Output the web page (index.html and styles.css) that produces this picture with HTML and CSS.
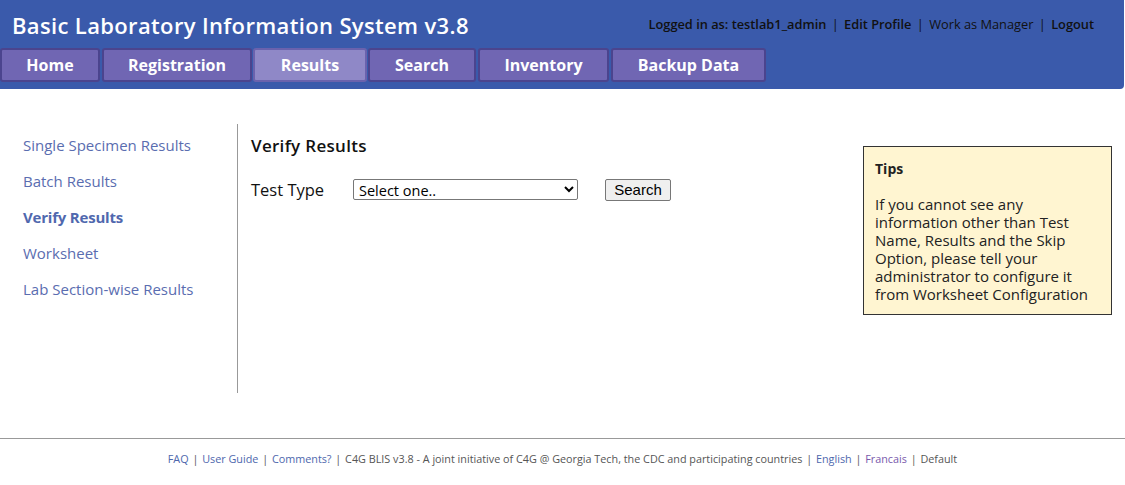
FILE: index.html
```html
<!DOCTYPE html>
<html>
<head>
<meta charset="utf-8">
<title>BLIS</title>
<link rel="stylesheet" href="styles.css">
</head>
<body>
<div class="header">
  <div class="top">
    <div class="title">Basic Laboratory Information System v3.8</div>
    <div class="user">
      <span class="strong">Logged in as: testlab1_admin</span>
      <span class="sep">|</span> <span class="strong">Edit Profile</span>
      <span class="sep">|</span> <span>Work as Manager</span>
      <span class="sep">|</span> <span class="strong">Logout</span>
    </div>
  </div>
  <div class="nav">
    <a class="tab t-home">Home</a>
    <a class="tab t-reg">Registration</a>
    <a class="tab t-res active">Results</a>
    <a class="tab t-search">Search</a>
    <a class="tab t-inv">Inventory</a>
    <a class="tab t-back">Backup Data</a>
  </div>
</div>

<div class="content">
  <div class="sidebar">
    <a class="side-link">Single Specimen Results</a>
    <a class="side-link">Batch Results</a>
    <a class="side-link current">Verify Results</a>
    <a class="side-link">Worksheet</a>
    <a class="side-link">Lab Section-wise Results</a>
  </div>
  <div class="main">
    <div class="form-area">
      <div class="page-title">Verify Results</div>
      <div class="form-row">
        <span class="label">Test Type</span>
        <select class="sel"><option>Select one..</option></select>
        <button class="btn">Search</button>
      </div>
    </div>
    <div class="tips">
      <div class="tips-title">Tips</div>
      <p class="tips-text">If you cannot see any information other than Test Name, Results and the Skip Option, please tell your administrator to configure it from Worksheet Configuration</p>
    </div>
  </div>
</div>

<div class="footer">
  <a class="f-link">FAQ</a> <span class="f-sep">|</span>
  <a class="f-link">User Guide</a> <span class="f-sep">|</span>
  <a class="f-link">Comments?</a> <span class="f-sep">|</span>
  <span class="f-text">C4G BLIS v3.8 - A joint initiative of C4G @ Georgia Tech, the CDC and participating countries</span> <span class="f-sep">|</span>
  <a class="f-link">English</a> <span class="f-sep">|</span>
  <a class="f-link visited">Francais</a> <span class="f-sep">|</span>
  <span class="f-text">Default</span>
</div>
</body>
</html>
```

FILE: styles.css
```css
* { box-sizing: border-box; }
body {
  margin: 0;
  font-family: "Open Sans", "Noto Sans", sans-serif;
  background: #fff;
  color: #111;
}
.header {
  width: 1124px;
  height: 89px;
  background: #3a5aab;
  border-radius: 0 0 4px 0;
  padding-top: 9px;
}
.top {
  display: flex;
  justify-content: space-between;
  align-items: center;
  height: 32px;
  padding: 0 30px 0 12px;
}
.title {
  color: #fff;
  font-size: 22px;
  font-weight: 600;
  letter-spacing: 0.35px;
}
.user {
  font-size: 12.8px;
  color: #111;
  margin-top: -2px;
}
.user .strong { font-weight: 600; }
.user .sep { margin: 0 2px; }
.nav {
  display: flex;
  margin-top: 7px;
}
.tab {
  display: flex;
  align-items: center;
  justify-content: center;
  height: 34px;
  background: #7066b3;
  border: 2px solid #4b448e;
  border-radius: 3px;
  color: #fff;
  font-weight: 700;
  font-size: 16px;
}
.tab.active { background: #8f88c7; border-color: #6a62ad; }
.t-home { width: 100px; margin-right: 2px; }
.t-reg { width: 150px; margin-right: 1px; }
.t-res { width: 114px; margin-right: 1px; }
.t-search { width: 108px; margin-right: 2px; }
.t-inv { width: 131px; margin-right: 2px; }
.t-back { width: 155px; }

.content {
  display: flex;
  margin-top: 35px;
}
.sidebar {
  width: 238px;
  height: 269px;
  border-right: 1px solid #999;
  display: flex;
  flex-direction: column;
  padding: 11px 0 0 23px;
  gap: 15px;
}
.side-link {
  color: #5a6db0;
  font-size: 15px;
  line-height: 21px;
}
.side-link.current { font-weight: 700; color: #5068ae; letter-spacing: -0.2px; }
.main {
  flex: 1;
  display: flex;
  justify-content: space-between;
  padding: 11px 13px 0 13px;
}
.page-title {
  font-size: 17px;
  font-weight: 600;
  line-height: 22px;
  letter-spacing: 0.3px;
}
.form-row {
  display: flex;
  align-items: center;
  margin-top: 21px;
}
.label {
  font-size: 16.5px;
  width: 102px;
}
.sel {
  width: 225px;
  height: 21px;
  font-family: "Open Sans", sans-serif;
  font-size: 14.5px;
  border: 1px solid #777;
  border-radius: 2px;
  background: #fff;
  color: #000;
  padding: 0 1px;
}
.btn {
  margin-left: 27px;
  height: 22px;
  width: 66px;
  font-family: "Liberation Sans", Arial, sans-serif;
  font-size: 15px;
  background: #efefef;
  border: 1px solid #777;
  border-radius: 2px;
  padding: 0;
  color: #000;
}
.tips {
  width: 249px;
  height: 169px;
  margin-top: 11px;
  background: #fff5d1;
  border: 1px solid #333;
  padding: 12px 11px;
  color: #222;
}
.tips-title {
  font-weight: 700;
  font-size: 14px;
  line-height: 20px;
}
.tips-text {
  margin: 16px 0 0;
  font-size: 15px;
  line-height: 18px;
}
.footer {
  margin-top: 45px;
  border-top: 1px solid #999;
  padding-top: 12px;
  text-align: center;
  font-size: 10.8px;
  color: #555;
}
.f-link { color: #4e67ad; }
.f-link.visited { color: #7859ac; }
.f-sep { margin: 0 1px; }
```
